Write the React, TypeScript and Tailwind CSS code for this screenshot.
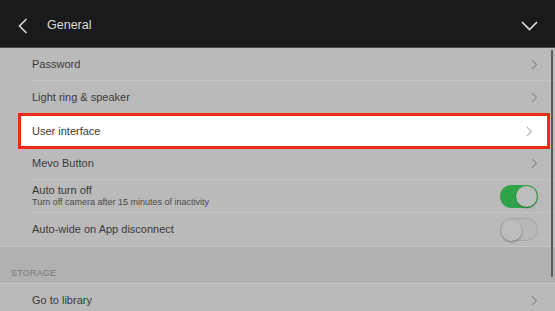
import React from "react";

const font = { fontFamily: '"Liberation Sans", Arial, sans-serif' };

function Chevron({ light = false }: { light?: boolean }) {
  return (
    <svg width="7" height="11" viewBox="0 0 7 11" className="shrink-0">
      <path
        d="M1 1l4.5 4.5L1 10"
        fill="none"
        stroke={light ? "#b8b8b8" : "#8a8a8a"}
        strokeWidth="1.1"
      />
    </svg>
  );
}

function Toggle({ on }: { on: boolean }) {
  return (
    <div
      className={`relative w-[38px] h-[23px] rounded-full shrink-0 ${
        on ? "bg-[#2fa34a]" : "bg-[#b8b8b8] border border-[#a8a8a8]"
      }`}
    >
      <div
        className={`absolute top-[1px] w-[21px] h-[21px] rounded-full bg-[#bdbdbd] shadow-[0_1px_2px_rgba(0,0,0,0.35)] ${
          on ? "right-[1px]" : "left-[0px] top-[0px]"
        }`}
      />
    </div>
  );
}

function Row({
  label,
  sub,
  toggle,
  last,
}: {
  label: string;
  sub?: string;
  toggle?: boolean;
  last?: boolean;
}) {
  return (
    <div className="pl-8 h-[33px]">
      <div
        className={`h-full flex items-center justify-between pr-[17px] ${
          last ? "" : "border-b border-[#c3c3c3]"
        }`}
      >
        <div className="flex flex-col">
          <span className="text-[11px] text-[#3a3a3a] leading-[13px]">{label}</span>
          {sub && (
            <span className="text-[9px] text-[#4a4a4a] leading-[11px]">{sub}</span>
          )}
        </div>
        {toggle === undefined ? <Chevron /> : <Toggle on={toggle} />}
      </div>
    </div>
  );
}

export default function App() {
  return (
    <div className="relative w-[555px] h-[311px] overflow-hidden bg-[#bababa]" style={font}>
      <div className="h-[48px] bg-[#1a1a1a] border-b border-[#4a4a4a] flex items-center justify-between pl-[18px] pr-[17px] pt-[4px]">
        <div className="flex items-center gap-[19px]">
          <svg width="10" height="16" viewBox="0 0 10 16">
            <path d="M8.5 1L1.5 8l7 7" fill="none" stroke="#d8d8d8" strokeWidth="1.6" />
          </svg>
          <span className="text-[12.5px] text-[#dcdcdc]">General</span>
        </div>
        <svg width="17" height="10" viewBox="0 0 17 10">
          <path d="M1 1l7.5 7.5L16 1" fill="none" stroke="#e0e0e0" strokeWidth="1.6" />
        </svg>
      </div>

      <Row label="Password" />
      <Row label="Light ring & speaker" />
      <Row label="User interface" />
      <Row label="Mevo Button" />
      <Row label="Auto turn off" sub="Turn off camera after 15 minutes of inactivity" toggle={true} />
      <Row label="Auto-wide on App disconnect" toggle={false} last />

      <div className="h-[38px] bg-[#b1b1b1] border-y border-[#c3c3c3] flex items-end pl-[11px] pb-[3px]">
        <span className="text-[9px] text-[#7a7a7a] tracking-[0.2px]">STORAGE</span>
      </div>
      <Row label="Go to library" />

      {/* highlight annotation */}
      <div className="absolute left-[18px] top-[113px] w-[532px] h-[36px] border-[3px] border-[#ec2a17] bg-white flex items-center justify-between pl-[11px] pr-[14px]">
        <span className="text-[11px] text-[#3a3a3a]">User interface</span>
        <Chevron light />
      </div>

      {/* scrollbar */}
      <div className="absolute left-[551px] top-[50px] w-[2px] h-[227px] rounded-full bg-[#5a5a5a]" />
    </div>
  );
}
